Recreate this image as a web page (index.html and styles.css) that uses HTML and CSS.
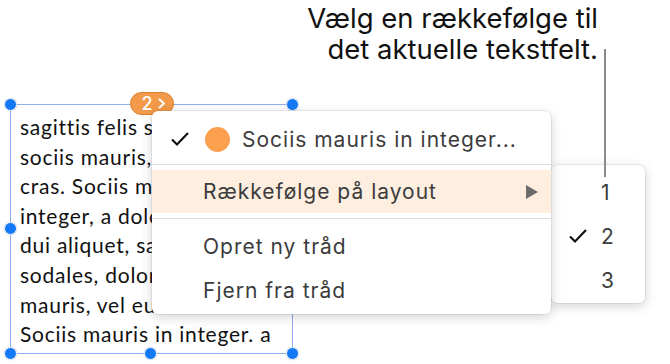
FILE: index.html
```html
<!DOCTYPE html>
<html lang="da">

<head>
    <meta charset="UTF-8">
    <meta name="viewport" content="width=device-width, initial-scale=1.0">
    <title>Rækkefølge på layout</title>
    <link rel="stylesheet" href="styles.css">
</head>

<body>
    <p class="caption">Vælg en rækkefølge til<br>det aktuelle tekstfelt.</p>

    <div class="textbox">
        <div class="textbox-text">
            sagittis felis sociis at<br>
            sociis mauris, elit ut<br>
            cras. Sociis mauris in<br>
            integer, a dolor netus<br>
            dui aliquet, sagittis<br>
            sodales, dolor mauris<br>
            mauris, vel euismod<br>
            Sociis mauris in integer. a
        </div>
    </div>

    <!-- selection handles -->
    <span class="handle" style="left: 4px; top: 98px;"></span>
    <span class="handle" style="left: 286px; top: 98px;"></span>
    <span class="handle" style="left: 4px; top: 222px;"></span>
    <span class="handle" style="left: 4px; top: 347px;"></span>
    <span class="handle" style="left: 144px; top: 347px;"></span>
    <span class="handle" style="left: 286px; top: 347px;"></span>

    <div class="badge">
        <span>2</span>
        <svg width="8" height="11" viewBox="0 0 8 11">
            <path d="M1.5 1.5 L6 5.5 L1.5 9.5" fill="none" stroke="#fff" stroke-width="2" stroke-linecap="round" stroke-linejoin="round" />
        </svg>
    </div>

    <div class="menu">
        <div class="menu-item first">
            <svg class="check" width="20" height="16" viewBox="0 0 20 16">
                <path d="M2 8.5 L7 13.5 L18 2" fill="none" stroke="#111" stroke-width="2.2" />
            </svg>
            <span class="dot"></span>
            <span>Sociis mauris in integer...</span>
        </div>
        <div class="separator first-sep"></div>
        <div class="menu-item active">
            <span>Rækkefølge på layout</span>
            <svg class="arrow" width="12" height="14" viewBox="0 0 12 14">
                <path d="M0 0 L12 7 L0 14 Z" fill="#6b6b6b" />
            </svg>
        </div>
        <div class="separator"></div>
        <div class="menu-item">Opret ny tråd</div>
        <div class="menu-item">Fjern fra tråd</div>
    </div>

    <div class="submenu">
        <div class="submenu-item">1</div>
        <div class="submenu-item">
            <svg class="check" width="20" height="16" viewBox="0 0 20 16">
                <path d="M2 8.5 L7 13.5 L18 2" fill="none" stroke="#111" stroke-width="2.2" />
            </svg>
            <span>2</span>
        </div>
        <div class="submenu-item">3</div>
    </div>

    <div class="callout-line"></div>
</body>

</html>
```

FILE: styles.css
```css
body {
    margin: 0;
    width: 670px;
    height: 364px;
    overflow: hidden;
    background-color: #fff;
    position: relative;
    font-family: Inter, "Liberation Sans", sans-serif;
}

.caption {
    margin: 0;
    padding: 3px 72px 0 0;
    text-align: right;
    font-size: 27.5px;
    line-height: 31px;
    color: #111;
}

.textbox {
    box-sizing: border-box;
    margin: 39px 0 0 10px;
    width: 283px;
    height: 250px;
    border: 1px solid #8eaef0;
    overflow: hidden;
}

.textbox-text {
    padding: 7px 0 0 9px;
    font-family: Lato, "Open Sans", sans-serif;
    font-size: 21px;
    letter-spacing: 0.75px;
    line-height: 29.6px;
    color: #111;
    white-space: nowrap;
}

.handle {
    position: absolute;
    box-sizing: border-box;
    width: 13px;
    height: 13px;
    border-radius: 50%;
    background-color: #1479f6;
    border: 1.5px solid #fff;
    box-shadow: 0 0 1px rgba(0, 0, 0, 0.35);
}

.badge {
    position: absolute;
    left: 130px;
    top: 92px;
    box-sizing: border-box;
    width: 44px;
    height: 23px;
    border-radius: 12px;
    background-color: #f2994a;
    border: 1px solid #d9822f;
    display: flex;
    align-items: center;
    justify-content: center;
    gap: 5px;
    padding-left: 3px;
    color: #fff;
    font-size: 18px;
    font-weight: 500;
}

.menu {
    position: absolute;
    left: 152px;
    top: 111px;
    width: 399px;
    height: 203px;
    box-sizing: border-box;
    padding-top: 6px;
    background-color: #fff;
    border-radius: 6px;
    box-shadow: 0 0 0 0.5px rgba(0, 0, 0, 0.12), 0 3px 12px rgba(0, 0, 0, 0.18);
    z-index: 2;
}

.menu-item {
    display: flex;
    align-items: center;
    height: 44px;
    padding-left: 51px;
    font-size: 21px;
    letter-spacing: 1px;
    color: #3c3c3c;
}

.menu-item.first {
    padding-left: 18px;
}

.menu-item.active {
    background-color: #fdeee0;
    height: 43px;
}

.check {
    flex: none;
}

.dot {
    flex: none;
    width: 25px;
    height: 25px;
    border-radius: 50%;
    background-color: #fc9f4e;
    margin: 0 12px 0 15px;
}

.arrow {
    margin-left: auto;
    margin-right: 13px;
}

.separator {
    height: 1px;
    background-color: #dedede;
    margin: 5px 0;
}

.separator.first-sep {
    margin: 3px 0 5px;
}

.submenu {
    position: absolute;
    left: 551px;
    top: 165px;
    width: 94px;
    height: 138px;
    box-sizing: border-box;
    padding-top: 5px;
    background-color: #fff;
    border-radius: 6px;
    box-shadow: 0 0 0 0.5px rgba(0, 0, 0, 0.12), 0 3px 12px rgba(0, 0, 0, 0.18);
    z-index: 1;
}

.submenu-item {
    display: flex;
    align-items: center;
    height: 44px;
    padding-left: 50px;
    font-size: 21px;
    color: #3c3c3c;
}

.submenu-item .check {
    margin-left: -33px;
    margin-right: 13px;
}

.callout-line {
    position: absolute;
    left: 604px;
    top: 49px;
    width: 2px;
    height: 128px;
    background-color: #8c8c8c;
    z-index: 3;
}
```
